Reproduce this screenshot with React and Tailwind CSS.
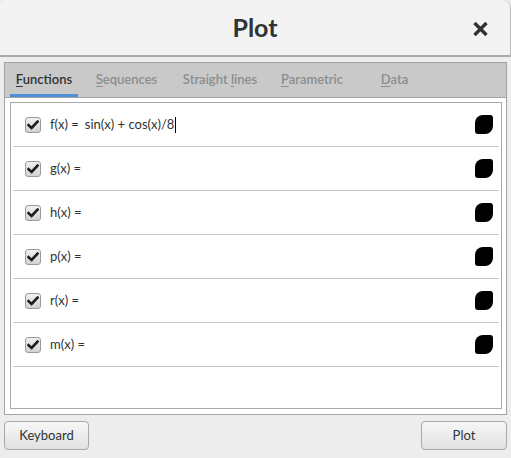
import React from 'react';

const rows = [
  { name: 'f(x) =', expr: 'sin(x) + cos(x)/8', focused: true },
  { name: 'g(x) =' },
  { name: 'h(x) =' },
  { name: 'p(x) =' },
  { name: 'r(x) =' },
  { name: 'm(x) =' },
];

function CheckBox() {
  return (
    <div className="w-[16px] h-[16px] rounded-[3px] border border-[#9a9a9a] bg-gradient-to-b from-[#f0f0f0] to-[#d2d2d2] flex items-center justify-center shrink-0">
      <svg width="12" height="10" viewBox="0 0 12 10">
        <path d="M1.5 5.2 L4.6 8 L10.6 1.6" fill="none" stroke="#1a1a1a" strokeWidth="2.6" strokeLinecap="square" strokeLinejoin="miter" />
      </svg>
    </div>
  );
}

function Row({ name, expr, focused }) {
  return (
    <div className="h-[44px] mx-[2px] border-b border-[#c6c6c6] flex items-center pl-[12px] pr-[6px]">
      <CheckBox />
      <div className="ml-[9px] flex-1 flex items-center text-[13px] text-[#2e3436]">
        <span>{name}</span>
        {expr && <span className="ml-[6px]">{expr}</span>}
        {focused && <span className="ml-[1px] w-px h-[16px] bg-black" />}
      </div>
      <div className="w-[18px] h-[19px] bg-black rounded-tl-[8px] rounded-br-[8px] rounded-tr-[3px] rounded-bl-[3px]" />
    </div>
  );
}

const tabs = [
  { w: 'w-[68px]', pre: '', u: 'F', post: 'unctions', active: true },
  { w: 'w-[97px]', pre: '', u: 'S', post: 'equences' },
  { w: 'w-[90px]', pre: 'Straight ', u: 'l', post: 'ines' },
  { w: 'w-[94px]', pre: '', u: 'P', post: 'arametric' },
  { w: 'w-[71px]', pre: '', u: 'D', post: 'ata' },
];

export default function App() {
  return (
    <div className="w-[511px] h-[458px] bg-[#ededed] flex flex-col font-['Lato','Noto_Sans',sans-serif] overflow-hidden">
      {/* Title bar */}
      <header className="h-[57px] shrink-0 bg-[#f3f3f3] rounded-t-[8px] border-b-2 border-[#a9a9a9] border-r border-r-[#bdbdbd] flex items-center relative">
        <h1 className="flex-1 text-center text-[25px] font-bold text-[#2e3436] pt-[1px]">Plot</h1>
        <button className="absolute right-[21px] top-[21px] w-[17px] h-[16px] flex items-center justify-center">
          <svg width="17" height="16" viewBox="0 0 17 16">
            <path d="M2.5 2 L14.5 14 M14.5 2 L2.5 14" stroke="#2e3436" strokeWidth="3.4" strokeLinecap="butt" />
          </svg>
        </button>
      </header>

      <div className="flex-1 flex flex-col px-[4px] pt-[5px]">
        {/* Notebook */}
        <div className="h-[353px] w-[503px] border border-[#a3a3a3] flex flex-col bg-white">
          <div className="h-[35px] shrink-0 bg-[#c9c9c9] border-b border-[#a3a3a3] flex items-stretch pl-[5px]">
            {tabs.map((t, i) => (
              <div
                key={i}
                className={`${t.w} flex items-center justify-center text-[13px] font-semibold relative ${t.active ? 'text-[#2e3436]' : 'text-[#8b8e8f]'}`}
              >
                <span>
                  {t.pre}
                  <span className="underline underline-offset-2">{t.u}</span>
                  {t.post}
                </span>
                {t.active && <span className="absolute left-0 right-0 bottom-0 h-[3px] bg-[#4a90d9]" />}
              </div>
            ))}
          </div>
          <div className="flex-1 pt-[4px] pl-[5px] pr-[4px] pb-[5px]">
            <div className="h-full border border-[#a8a8a8]">
              {rows.map((r, i) => (
                <Row key={i} {...r} />
              ))}
            </div>
          </div>
        </div>

        {/* Bottom buttons */}
        <div className="flex justify-between mt-[6px]">
          <button className="w-[85px] h-[29px] rounded-[4px] border border-[#a8a8a8] bg-gradient-to-b from-[#f7f7f7] to-[#e1e1e1] text-[13px] text-[#2e3436]">
            Keyboard
          </button>
          <button className="w-[86px] h-[29px] rounded-[4px] border border-[#a8a8a8] bg-gradient-to-b from-[#f7f7f7] to-[#e1e1e1] text-[13px] text-[#2e3436]">
            Plot
          </button>
        </div>
      </div>
    </div>
  );
}
